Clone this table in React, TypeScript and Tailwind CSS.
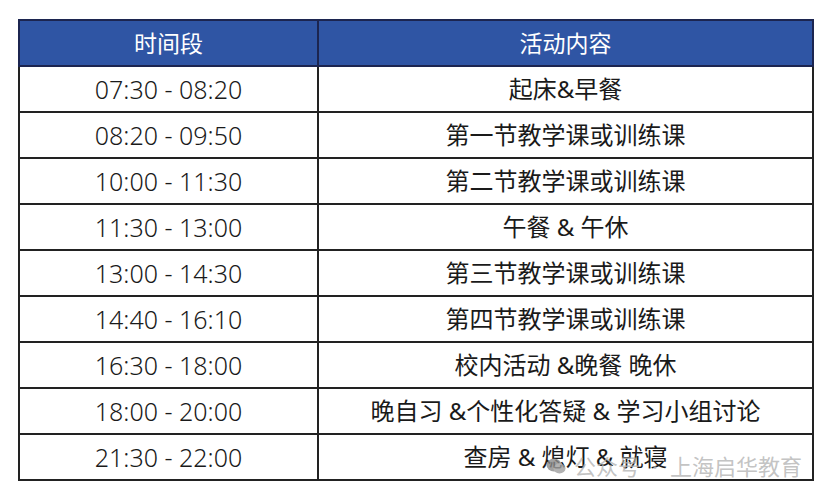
const rows = [
  { time: "07:30 - 08:20", activity: "起床&早餐" },
  { time: "08:20 - 09:50", activity: "第一节教学课或训练课" },
  { time: "10:00 - 11:30", activity: "第二节教学课或训练课" },
  { time: "11:30 - 13:00", activity: "午餐 & 午休" },
  { time: "13:00 - 14:30", activity: "第三节教学课或训练课" },
  { time: "14:40 - 16:10", activity: "第四节教学课或训练课" },
  { time: "16:30 - 18:00", activity: "校内活动 &晚餐 晚休" },
  { time: "18:00 - 20:00", activity: "晚自习 &个性化答疑 & 学习小组讨论" },
  { time: "21:30 - 22:00", activity: "查房 & 熄灯 & 就寝" },
];

export default function App() {
  return (
    <div
      className="relative w-[828px] h-[502px] bg-white pt-[19px] pl-[18px]"
      style={{ fontFamily: '"Noto Sans", "Noto Sans CJK SC", sans-serif' }}
    >
      <table className="border-collapse w-[794px] table-fixed">
        <colgroup>
          <col className="w-[299px]" />
          <col className="w-[495px]" />
        </colgroup>
        <thead>
          <tr className="h-[46px] bg-[#2f55a4]">
            <th className="border-2 border-[#1c2550] text-white text-[23px] font-normal text-center">
              时间段
            </th>
            <th className="border-2 border-[#1c2550] text-white text-[23px] font-normal text-center">
              活动内容
            </th>
          </tr>
        </thead>
        <tbody>
          {rows.map((r) => (
            <tr key={r.time} className="h-[46px]">
              <td className="border-2 border-[#222] text-[#1a1a1a] text-[25px] font-light text-center leading-none">
                {r.time}
              </td>
              <td className="border-2 border-[#222] text-[#1a1a1a] text-[24px] text-center leading-none">
                {r.activity}
              </td>
            </tr>
          ))}
        </tbody>
      </table>

      {/* watermark */}
      <div className="absolute left-[546px] top-[455px] flex items-center gap-[8px] text-[22px] text-[#b4b4b4]/80 leading-none">
        <svg width="20" height="18" viewBox="0 0 20 18" className="opacity-80">
          <ellipse cx="8" cy="8" rx="7.5" ry="6.5" fill="#8a8a8a" />
          <ellipse cx="13.5" cy="11.5" rx="6" ry="5" fill="#a0a0a0" />
        </svg>
        <span>公众号</span>
        <span className="mx-[4px]">·</span>
        <span>上海启华教育</span>
      </div>
    </div>
  );
}
